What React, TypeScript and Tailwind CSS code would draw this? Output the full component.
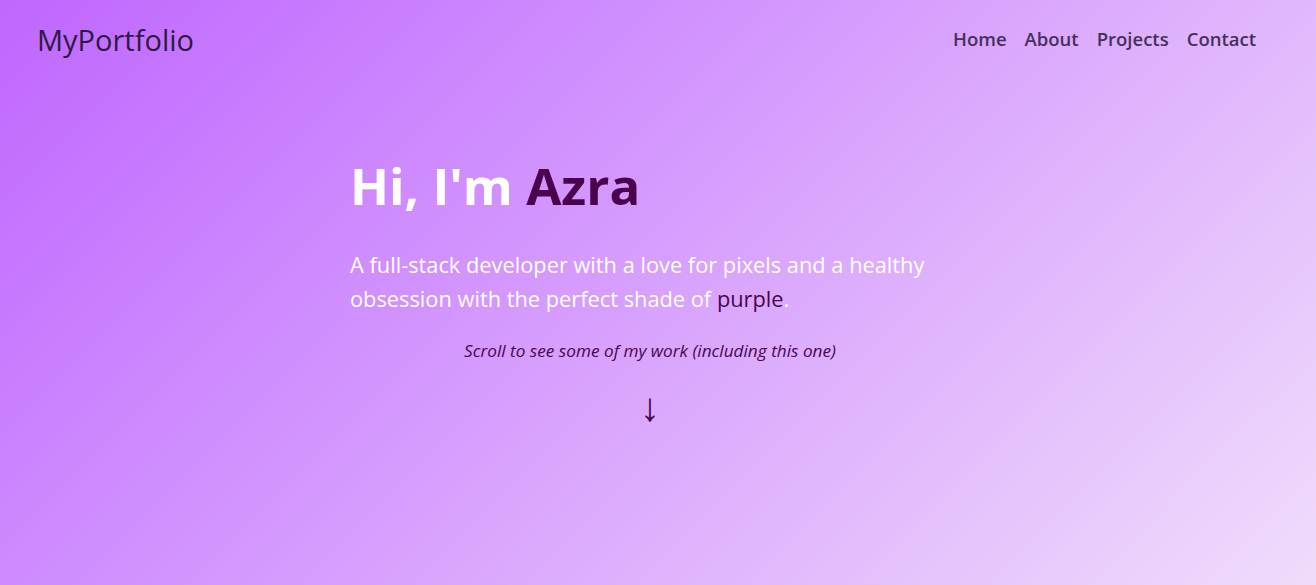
function App() {
  return (
    <div className="min-h-[585px] w-full bg-[linear-gradient(135deg,#bf66ff,#f0dcfb)] font-['Open_Sans',sans-serif]">
      <header className="flex items-center justify-between pl-[37px] pr-[60px] pt-[18px]">
        <span className="text-[29px] leading-[44px] text-[#2e1a40]">MyPortfolio</span>
        <nav className="-mt-[2px] flex gap-[18px] text-[18.5px] font-semibold text-[#45305a]">
          <a href="#home">Home</a>
          <a href="#about">About</a>
          <a href="#projects">Projects</a>
          <a href="#contact">Contact</a>
        </nav>
      </header>

      <main className="flex justify-center pr-4 pt-[92px]">
        <div className="flex w-[600px] flex-col">
          <h1 className="text-[51px] font-bold leading-[62px] text-white">
            Hi, I'm <span className="text-[#4a044e]">Azra</span>
          </h1>
          <p className="mt-[32px] text-[21.8px] leading-[34px] text-white">
            A full-stack developer with a love for pixels and a healthy obsession with the perfect shade of{" "}
            <span className="text-[#4a044e]">purple</span>.
          </p>
          <p className="mt-[22px] text-center text-[17.2px] italic text-[#4a044e]">
            Scroll to see some of my work (including this one)
          </p>
          <div className="mt-[22px] text-center text-[40px] leading-none text-[#4a044e]">↓</div>
        </div>
      </main>
    </div>
  );
}

export default App;
